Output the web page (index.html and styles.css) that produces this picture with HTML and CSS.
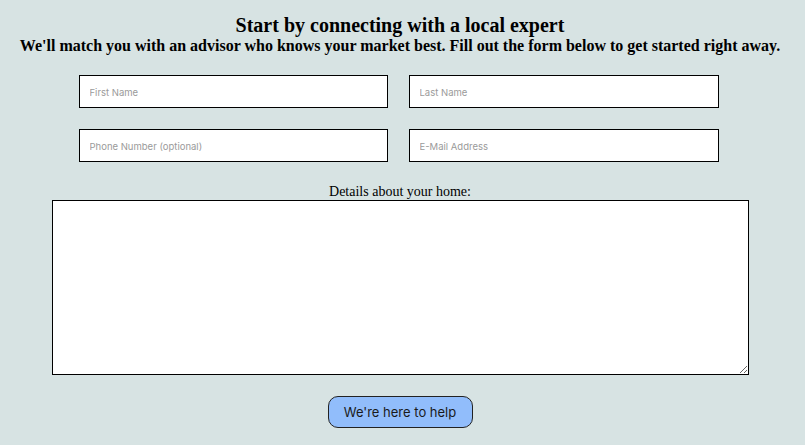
FILE: index.html
```html
<!DOCTYPE html>
<html>
<head>
<meta charset="utf-8">
<link rel="stylesheet" href="styles.css">
</head>
<body>
<div class="page">
  <h1 class="title">Start by connecting with a local expert</h1>
  <p class="subtitle">We'll match you with an advisor who knows your market best. Fill out the form below to get started right away.</p>
  <form class="form">
    <div class="grid">
      <input class="field" type="text" placeholder="First Name">
      <input class="field" type="text" placeholder="Last Name">
      <input class="field" type="text" placeholder="Phone Number (optional)">
      <input class="field" type="text" placeholder="E-Mail Address">
    </div>
    <label class="label" for="details">Details about your home:</label>
    <textarea class="details" id="details"></textarea>
    <button class="submit" type="button">We're here to help</button>
  </form>
</div>
</body>
</html>
```

FILE: styles.css
```css
html, body {
  margin: 0;
  padding: 0;
  background: #d7e3e3;
}
body {
  font-family: "Liberation Serif", "Times New Roman", serif;
  color: #000;
}
.page {
  display: flex;
  flex-direction: column;
  align-items: center;
  padding-top: 14px;
  padding-right: 5px;
}
.title {
  font-size: 20px;
  font-weight: bold;
  margin: 0;
  line-height: 23px;
}
.subtitle {
  font-size: 16px;
  font-weight: bold;
  margin: 0;
  line-height: 18px;
  white-space: nowrap;
}
.form {
  display: flex;
  flex-direction: column;
  align-items: center;
  margin-top: 20px;
}
.grid {
  display: grid;
  grid-template-columns: 309px 310px;
  column-gap: 21px;
  row-gap: 21px;
  margin-right: 3px;
}
.field {
  box-sizing: border-box;
  height: 33px;
  border: 1px solid #000;
  background: #fff;
  padding: 1px 10px 0;
  font-family: "Inter", "Liberation Sans", sans-serif;
  font-size: 9.5px;
  outline: none;
  margin: 0;
}
.field::placeholder {
  color: #9a9a9a;
}
.label {
  font-size: 14px;
  margin-top: 22px;
  line-height: 16px;
}
.details {
  box-sizing: border-box;
  width: 697px;
  height: 175px;
  border: 1px solid #000;
  background: #fff;
  margin: 0;
  resize: both;
}
.submit {
  margin-top: 21px;
  width: 145px;
  height: 32px;
  background: #91bdfb;
  border: 1px solid #222;
  border-radius: 10px;
  font-family: "Inter", "Liberation Sans", sans-serif;
  font-size: 13px;
  color: #1a1a1a;
  padding: 0;
}
```
